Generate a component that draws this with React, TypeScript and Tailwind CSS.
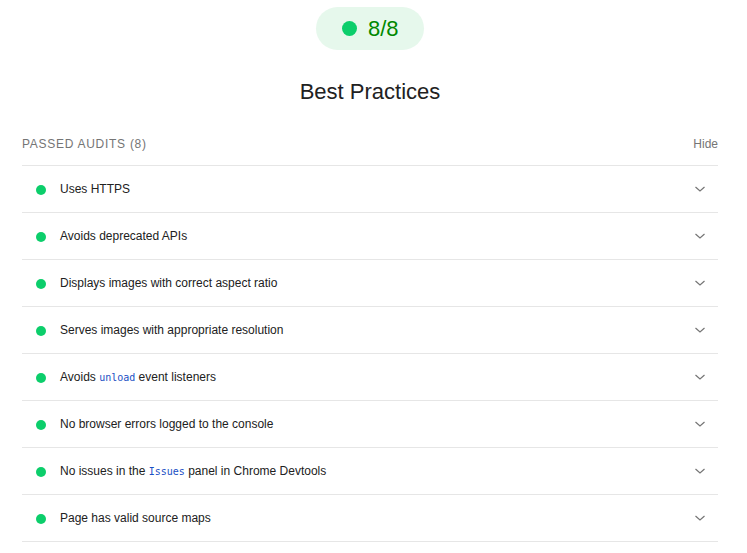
const audits: { pre: string; code?: string; post?: string }[] = [
  { pre: "Uses HTTPS" },
  { pre: "Avoids deprecated APIs" },
  { pre: "Displays images with correct aspect ratio" },
  { pre: "Serves images with appropriate resolution" },
  { pre: "Avoids ", code: "unload", post: " event listeners" },
  { pre: "No browser errors logged to the console" },
  { pre: "No issues in the ", code: "Issues", post: " panel in Chrome Devtools" },
  { pre: "Page has valid source maps" },
];

const Chevron = () => (
  <svg width="12" height="8" viewBox="0 0 12 8" fill="none" stroke="#757575" strokeWidth="1.2">
    <path d="M1.5 2l4.5 4 4.5-4" />
  </svg>
);

export default function App() {
  return (
    <div className="bg-white min-h-[553px] w-[740px] font-['Liberation_Sans',Arial,sans-serif] text-[#212121]">
      <div className="flex justify-center pt-[7px]">
        <div className="flex items-center gap-[11px] h-[43px] w-[108px] rounded-full bg-[#e6f8ec] pl-[26px]">
          <span className="w-[15px] h-[15px] rounded-full bg-[#0cce6b]" />
          <span className="text-[22px] text-[#008800] leading-none">8/8</span>
        </div>
      </div>
      <h1 className="text-center text-[22px] leading-none mt-[31px]">Best Practices</h1>
      <div className="w-[696px] ml-[22px] mt-[30px]">
        <div className="flex items-center justify-between h-[22px] mb-[10px] text-[12px] text-[#757575]">
          <span className="tracking-[0.06em]">PASSED AUDITS (8)</span>
          <span>Hide</span>
        </div>
        <div className="border-t border-[#e6e6e6]">
          {audits.map((a, i) => (
            <div key={i} className="flex items-center h-[47px] border-b border-[#e6e6e6] pl-[14px] pr-[12px]">
              <span className="w-[10px] h-[10px] rounded-full bg-[#0cce6b] mt-[1px]" />
              <span className="ml-[14px] text-[12px] flex-1">
                {a.pre}
                {a.code && (
                  <code className="font-['DejaVu_Sans_Mono',monospace] text-[10px] text-[#1a4fc4]">{a.code}</code>
                )}
                {a.post}
              </span>
              <Chevron />
            </div>
          ))}
        </div>
      </div>
    </div>
  );
}
